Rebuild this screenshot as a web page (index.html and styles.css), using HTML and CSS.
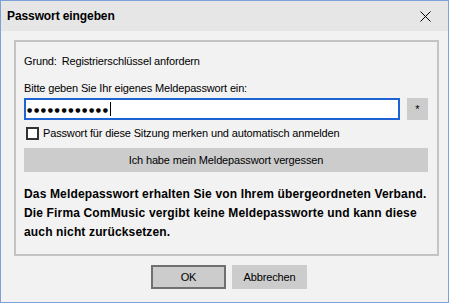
FILE: index.html
```html
<!DOCTYPE html>
<html lang="de">

<head>
    <meta charset="UTF-8">
    <title>Passwort eingeben</title>
    <link rel="stylesheet" href="styles.css">
</head>

<body>
    <div class="fenster">
        <div class="titelleiste">
            <span class="titel">Passwort eingeben</span>
            <button class="btn-schliessen">
                <svg width="11" height="11" viewBox="0 0 11 11">
                    <path d="M0.5 0.5 L10.5 10.5 M10.5 0.5 L0.5 10.5" stroke="#000" stroke-width="1" fill="none"/>
                </svg>
            </button>
        </div>
        <div class="inhalt">
            <div class="gruppe">
                <div class="zeile grund">
                    <span>Grund:</span>
                    <span>Registrierschlüssel anfordern</span>
                </div>
                <div class="zeile bitte">Bitte geben Sie Ihr eigenes Meldepasswort ein:</div>
                <div class="eingabeZeile">
                    <div class="eingabe">
                        <span class="punkte">●●●●●●●●●●●●</span><span class="cursor"></span>
                    </div>
                    <button class="btn-stern">*</button>
                </div>
                <label class="zeile merken">
                    <span class="kasten"></span>
                    Passwort für diese Sitzung merken und automatisch anmelden
                </label>
                <button class="btn-vergessen">Ich habe mein Meldepasswort vergessen</button>
                <p class="hinweis">
                    Das Meldepasswort erhalten Sie von Ihrem übergeordneten Verband.<br>
                    Die Firma ComMusic vergibt keine Meldepassworte und kann diese<br>
                    auch nicht zurücksetzen.
                </p>
            </div>
            <div class="knoepfe">
                <button class="btn-ok">OK</button>
                <button class="btn-abbrechen">Abbrechen</button>
            </div>
        </div>
    </div>
</body>

</html>
```

FILE: styles.css
```css
* {
    margin: 0;
    padding: 0;
    box-sizing: border-box;
}

body {
    font-family: "Liberation Sans", Arial, sans-serif;
    font-size: 11px;
    letter-spacing: -0.15px;
    color: #000;
    background-color: #f2f2f2;
}

.fenster {
    width: 449px;
    height: 303px;
    border: 1px solid #7ea2d6;
    background-color: #f2f2f2;
    display: flex;
    flex-direction: column;
}

.titelleiste {
    height: 30px;
    background-color: #e6e6e6;
    display: flex;
    align-items: center;
    justify-content: space-between;
    padding-left: 6px;
    padding-right: 17px;
}

.titel {
    font-weight: bold;
    font-size: 12px;
    letter-spacing: -0.1px;
}

.btn-schliessen {
    border: 0;
    background: transparent;
    width: 11px;
    height: 11px;
    display: flex;
}

.inhalt {
    padding: 9px 10px 0 13px;
}

.gruppe {
    width: 425px;
    height: 216px;
    border: 2px solid #c4c4c4;
    padding: 11px 8px 0 8px;
}

.zeile {
    height: 16px;
    line-height: 16px;
    display: flex;
    align-items: center;
    white-space: nowrap;
}

.grund span:first-child {
    margin-right: 5px;
}

.bitte {
    margin-top: 11px;
}

.eingabeZeile {
    margin-top: 2px;
    display: flex;
    gap: 7px;
}

.eingabe {
    width: 376px;
    height: 22px;
    border: 2px solid #1d63d4;
    background-color: #fff;
    display: flex;
    align-items: center;
    padding-left: 1px;
}

.punkte {
    font-family: "DejaVu Sans", sans-serif;
    font-size: 6px;
    letter-spacing: 1.65px;
}

.cursor {
    width: 1px;
    height: 14px;
    background-color: #000;
}

.btn-stern {
    width: 21px;
    height: 22px;
    border: 0;
    background-color: #cccccc;
    font-family: inherit;
    font-size: 11px;
    line-height: 22px;
}

.merken {
    margin-top: 5px;
    margin-left: 2px;
    gap: 4px;
}

.kasten {
    width: 13px;
    height: 13px;
    border: 2px solid #333;
    background-color: #fff;
}

.btn-vergessen {
    margin-top: 7px;
    width: 404px;
    height: 24px;
    border: 0;
    background-color: #cccccc;
    font-family: inherit;
    font-size: 11px;
    letter-spacing: -0.15px;
}

.hinweis {
    margin-top: 13px;
    font-weight: bold;
    font-size: 12px;
    line-height: 19px;
    white-space: nowrap;
    letter-spacing: 0.15px;
}

.knoepfe {
    margin-top: 9px;
    display: flex;
    justify-content: center;
    gap: 6px;
    padding-left: 6px;
}

.knoepfe button {
    width: 75px;
    height: 24px;
    background-color: #cccccc;
    font-family: inherit;
    font-size: 11px;
    letter-spacing: -0.15px;
    border: 0;
}

.btn-ok {
    border: 2px solid #707070 !important;
}
```
